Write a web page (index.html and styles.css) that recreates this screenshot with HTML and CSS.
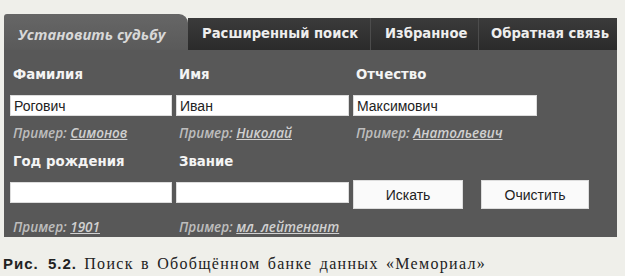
FILE: index.html
```html
<!DOCTYPE html>
<html lang="ru">
<head>
    <meta charset="UTF-8">
    <title>Мемориал - поиск</title>
    <link rel="stylesheet" href="styles.css">
</head>
<body>
    <div class="panel">
        <div class="tabs">
            <div class="tab active">Установить судьбу</div>
            <div class="tab tab-adv">Расширенный поиск</div>
            <div class="tab tab-fav">Избранное</div>
            <div class="tab tab-fb">Обратная связь</div>
        </div>

        <form class="search">
            <div class="field">
                <label>Фамилия</label>
                <input type="text" value="Рогович">
                <div class="hint">Пример: <a href="#">Симонов</a></div>
            </div>
            <div class="field">
                <label>Имя</label>
                <input type="text" value="Иван">
                <div class="hint">Пример: <a href="#">Николай</a></div>
            </div>
            <div class="field">
                <label>Отчество</label>
                <input type="text" value="Максимович">
                <div class="hint">Пример: <a href="#">Анатольевич</a></div>
            </div>

            <div class="field second">
                <label>Год рождения</label>
                <input type="text">
                <div class="hint">Пример: <a href="#">1901</a></div>
            </div>
            <div class="field second">
                <label>Звание</label>
                <input type="text">
                <div class="hint">Пример: <a href="#">мл. лейтенант</a></div>
            </div>
            <div class="buttons">
                <button type="submit">Искать</button>
                <button type="reset">Очистить</button>
            </div>
        </form>
    </div>

    <p class="caption"><b>Рис. 5.2.</b> Поиск в Обобщённом банке данных «Мемориал»</p>
</body>
</html>
```

FILE: styles.css
```css
body {
    margin: 0;
    background: #efefea;
    font-family: "DejaVu Sans", Verdana, sans-serif;
    color: #222;
}
.panel {
    width: 613px;
    margin: 14px 0 0 4px;
}
.tabs {
    display: flex;
    align-items: flex-end;
    height: 36px;
}
.tab {
    height: 32px;
    line-height: 32px;
    box-sizing: border-box;
    padding-left: 14px;
    background: linear-gradient(#3b3b3b, #2b2b2b);
    color: #eee;
    font-weight: bold;
    font-size: 13.2px;
    white-space: nowrap;
}
.tab.active {
    width: 184px;
    height: 36px;
    line-height: 40px;
    background: linear-gradient(#666, #5a5a5a);
    border-radius: 3px 9px 0 0;
    color: #d8d8d8;
    font-family: "Open Sans", sans-serif;
    font-style: italic;
    font-size: 14.8px;
    padding-left: 14px;
}
.tab-adv {
    width: 182px;
}
.tab-fav {
    width: 108px;
    border-left: 1px solid #4c4c4c;
}
.tab-fb {
    flex: 1;
    padding-left: 12px;
    border-left: 1px solid #4c4c4c;
}
.search {
    display: grid;
    grid-template-columns: 162px 173px 184px;
    column-gap: 4px;
    row-gap: 13px;
    padding: 17px 0 2px 6px;
    background: #585858;
}
.field {
    display: flex;
    flex-direction: column;
}
.field label {
    height: 16px;
    line-height: 16px;
    padding-left: 3px;
    color: #f4f4f4;
    font-weight: bold;
    font-size: 13.3px;
}
.field input {
    height: 21px;
    margin: 12px 0 9px;
    padding: 0 3px;
    box-sizing: border-box;
    border: 1px solid #ddd;
    background: #fff;
    font-family: "Liberation Sans", Arial, sans-serif;
    font-size: 14px;
    color: #222;
}
.field.second input {
    margin-bottom: 16px;
}
.hint {
    height: 16px;
    line-height: 16px;
    padding-left: 3px;
    color: #bdbdbd;
    font-family: "Open Sans", sans-serif;
    font-style: italic;
    font-weight: 600;
    font-size: 13.5px;
}
.hint a {
    color: #d0d0d0;
    text-decoration: underline;
}
.buttons {
    display: flex;
    gap: 18px;
    padding-top: 26px;
}
.buttons button {
    flex-shrink: 0;
    width: 110px;
    height: 29px;
    border: 1px solid #ddd;
    background: #fafafa;
    font-family: "Liberation Sans", Arial, sans-serif;
    font-size: 14px;
    color: #222;
}
.buttons button + button {
    width: 108px;
}
.caption {
    margin: 18px 0 0 3px;
    font-family: "Liberation Serif", "Times New Roman", serif;
    font-size: 16px;
    letter-spacing: 1.3px;
    word-spacing: 2px;
    color: #222;
}
.caption b {
    font-family: "Liberation Sans", Arial, sans-serif;
    font-size: 15px;
    letter-spacing: 1px;
    word-spacing: 4px;
}
```
